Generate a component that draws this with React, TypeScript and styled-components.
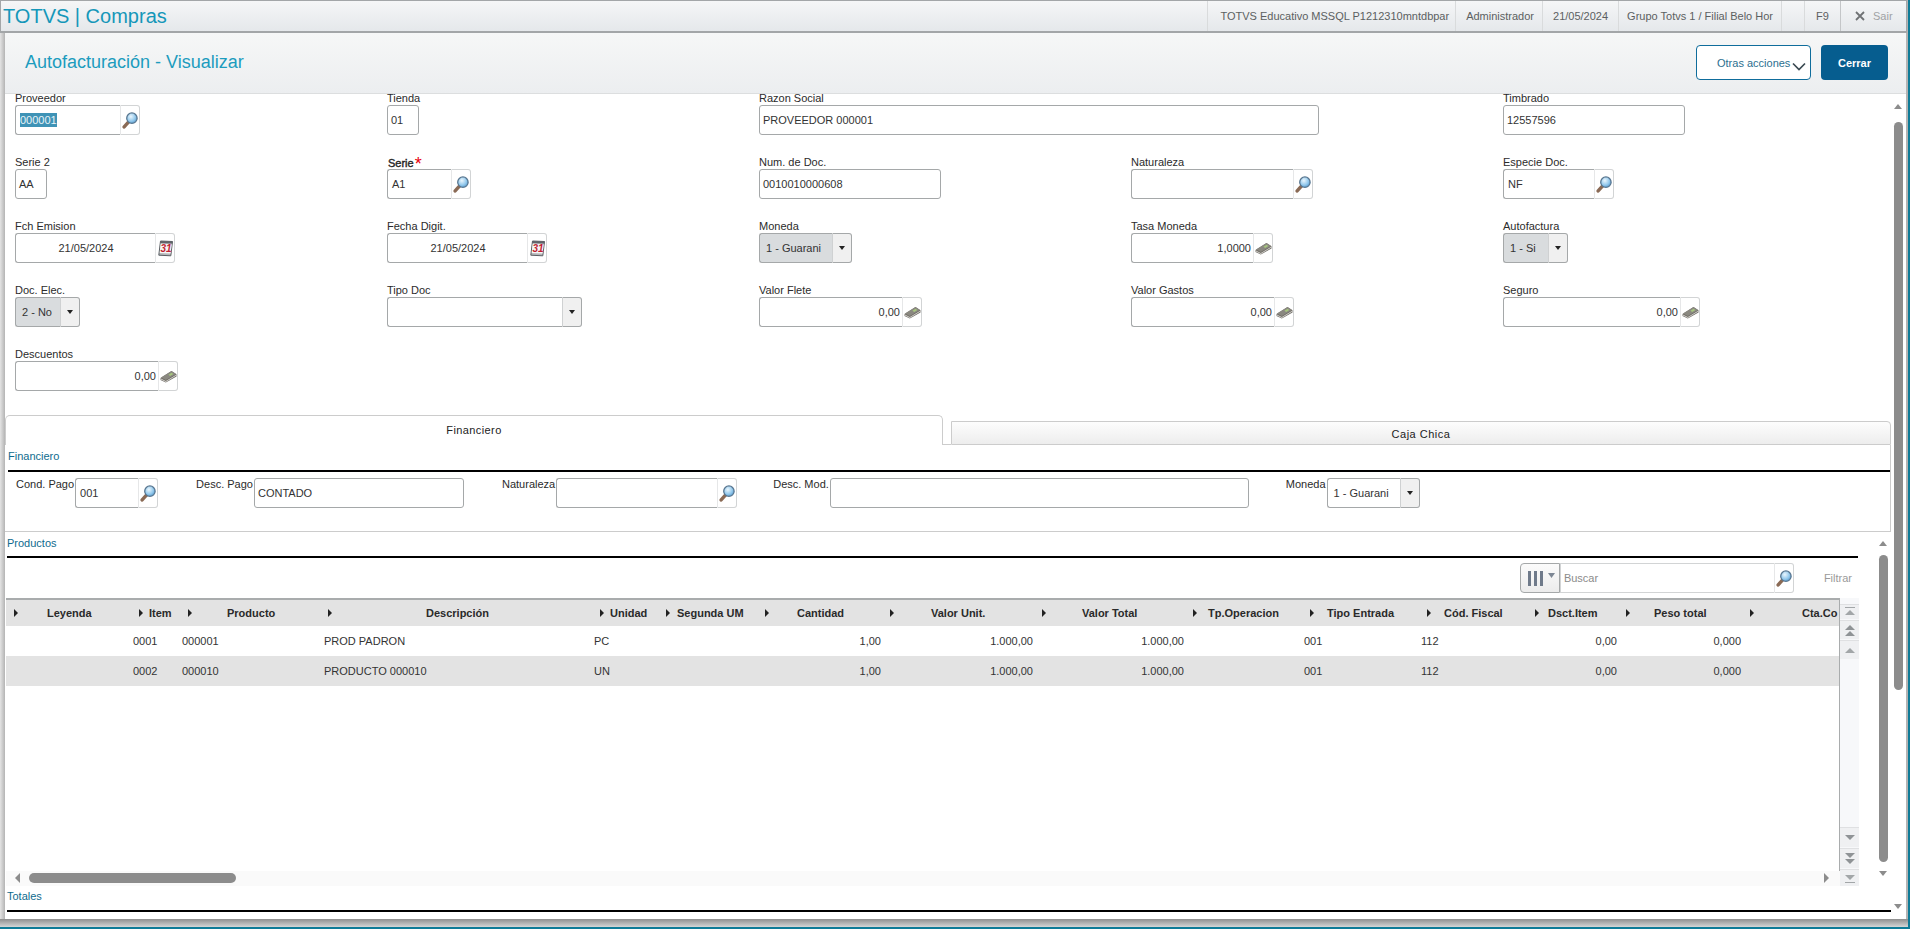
import React from "react";
import styled, { createGlobalStyle } from "styled-components";

const Global = createGlobalStyle`
  html, body { margin: 0; padding: 0; background: #fff; overflow: hidden; }
  body { font-family: "Liberation Sans", Arial, sans-serif; font-size: 11px; color: #333; }
  * { box-sizing: border-box; }
`;

const Frame = styled.div`
  width: 1910px;
  height: 929px;
  border-right: 2px solid #0f7b97;
  border-bottom: 2px solid #0f7b97;
  background: linear-gradient(to right, #e4e4e4 0, #b4b4b4 5px, #b4b4b4 100%);
  display: flex;
  flex-direction: column;
  overflow: hidden;
`;

const TopBar = styled.header`
  height: 33px;
  flex: none;
  margin-right: 1px;
  border: 1px solid #a3a6a8;
  border-bottom-width: 2px;
  background: linear-gradient(to bottom, #f5f6f7, #e5e8eb);
  display: flex;
  align-items: center;
  justify-content: space-between;
`;

const Brand = styled.div`
  font-size: 20px;
  color: #1597b9;
  padding-left: 2px;
  line-height: 28px;
  white-space: nowrap;
`;

const TopItems = styled.div`
  display: flex;
  align-items: stretch;
  height: 100%;
  color: #5c5f61;
`;

const TopItem = styled.div<{ $l?: number; $r?: number; $w?: number }>`
  display: flex;
  align-items: center;
  justify-content: center;
  padding: 0 ${(p) => p.$r ?? 9}px 0 ${(p) => p.$l ?? 9}px;
  width: ${(p) => (p.$w ? `${p.$w}px` : "auto")};
  border-left: 1px solid #d9dbdc;
  white-space: nowrap;
`;

const ExitItem = styled(TopItem)`
  gap: 8px;
  width: 66px;
  justify-content: flex-start;
  padding-left: 14px;
  border-left: 1px solid #c4c6c8;
  color: #a0a2a4;
`;

const Window = styled.main`
  position: relative;
  flex: none;
  width: 1901px;
  height: 886px;
  margin-left: 5px;
  background: #fff;
  overflow: hidden;
`;

const Shade = styled.div`
  flex: 1;
  background: linear-gradient(to bottom, #8e8e8e, #d6d6d6);
`;

const PageHeader = styled.div`
  height: 61px;
  border-bottom: 1px solid #dcdedf;
  background: linear-gradient(to bottom, #f6f7f7, #eceef0);
  display: flex;
  align-items: center;
  justify-content: space-between;
  padding: 0 18px 0 20px;
`;

const PageTitle = styled.h1`
  margin: -1px 0 0;
  font-weight: normal;
  font-size: 18px;
  color: #1c9cbe;
`;

const HeaderActions = styled.div`
  display: flex;
  gap: 10px;
  margin-top: -1px;
`;

const GhostButton = styled.button`
  width: 115px;
  height: 35px;
  padding: 0 0 0 20px;
  background: #fff;
  border: 1px solid #0f6d9c;
  border-radius: 4px;
  font: 11px "Liberation Sans", Arial, sans-serif;
  color: #2c6f90;
  display: flex;
  align-items: center;
`;

const PrimaryButton = styled.button`
  width: 67px;
  height: 35px;
  background: #065d8f;
  border: 0;
  border-radius: 4px;
  font: bold 11px "Liberation Sans", Arial, sans-serif;
  color: #fff;
`;

const FormGrid = styled.section`
  display: grid;
  grid-template-columns: repeat(5, 372px);
  grid-auto-rows: 41px;
  row-gap: 23px;
  padding-left: 10px;
`;

const Field = styled.div<{ $span?: number }>`
  grid-column: span ${(p) => p.$span ?? 1};
  display: flex;
  flex-direction: column;
`;

const Label = styled.label`
  height: 11px;
  line-height: 9px;
  color: #2b2b2b;
  white-space: nowrap;
`;

const StrongLabel = styled(Label)`
  -webkit-text-stroke: 0.4px #222;
  padding-left: 1px;
  line-height: 10px;
`;

const Star = styled.span`
  color: #e8000d;
  font-size: 18px;
  line-height: 8px;
  font-weight: normal;
  -webkit-text-stroke: 0;
  margin-left: 1px;
  vertical-align: -3px;
`;

const Control = styled.div<{ $w: number }>`
  width: ${(p) => p.$w}px;
  height: 30px;
  flex: none;
  display: flex;
`;

const Input = styled.div<{ $align?: string; $pad?: number; $joined?: boolean; $grey?: boolean }>`
  flex: 1;
  min-width: 0;
  height: 30px;
  display: flex;
  align-items: center;
  justify-content: ${(p) => p.$align ?? "flex-start"};
  padding: 0 2px 0 ${(p) => p.$pad ?? 3}px;
  border: 1px solid #a5a8a9;
  border-right: ${(p) => (p.$joined ? "0" : "1px solid #a5a8a9")};
  border-radius: ${(p) => (p.$joined ? "3px 0 0 3px" : "3px")};
  background: ${(p) => (p.$grey ? "#d9dcde" : "#fff")};
  color: #333;
  white-space: nowrap;
`;

const Selected = styled.span`
  background: #3f93b6;
  color: #e8f4f8;
  line-height: 14px;
`;

const IconAddon = styled.div<{ $w: number; $end?: boolean }>`
  width: ${(p) => p.$w}px;
  height: 30px;
  flex: none;
  border: 1px solid #d2d4d5;
  border-left: 1px solid #e6e7e8;
  border-radius: 0 3px 3px 0;
  display: flex;
  align-items: center;
  justify-content: ${(p) => (p.$end ? "flex-end" : "center")};
  padding-right: ${(p) => (p.$end ? "1px" : "0")};
`;

const SelectAddon = styled.div`
  width: 20px;
  flex: none;
  border: 1px solid #a5a8a9;
  border-left: 1px solid #cfd1d2;
  border-radius: 0 3px 3px 0;
  background: #f0f0f0;
  display: flex;
  align-items: center;
  justify-content: center;
`;

const Caret = styled.span`
  width: 0;
  height: 0;
  border-left: 3.5px solid transparent;
  border-right: 3.5px solid transparent;
  border-top: 4px solid #222;
`;

const Chevron = styled.svg`
  margin: 7px 0 0 2px;
  flex: none;
`;

const TabBar = styled.div`
  margin-top: 24px;
  width: 1886px;
  height: 30px;
  display: flex;
  align-items: flex-end;
`;

const ActiveTab = styled.div`
  width: 938px;
  height: 30px;
  padding-top: 7px;
  line-height: 14px;
  text-align: center;
  letter-spacing: 0.4px;
  color: #222;
  background: #fff;
  border: 1px solid #ccc;
  border-bottom: 0;
  border-radius: 5px 5px 0 0;
`;

const TabGap = styled.div`
  width: 8px;
  border-bottom: 1px solid #ccc;
`;

const IdleTab = styled.div`
  flex: 1;
  height: 24px;
  line-height: 24px;
  text-align: center;
  letter-spacing: 0.5px;
  color: #222;
  background: linear-gradient(to bottom, #fdfdfd, #ededed);
  border: 1px solid #ccc;
  border-radius: 0 4px 0 0;
`;

const TabPanel = styled.div`
  width: 1886px;
  height: 87px;
  border-right: 1px solid #ccc;
  border-bottom: 1px solid #ccc;
  padding-left: 3px;
`;

const SectionTitle = styled.div<{ $w: number; $h: number; $lh: number }>`
  width: ${(p) => p.$w}px;
  height: ${(p) => p.$h}px;
  line-height: ${(p) => p.$lh}px;
  border-bottom: 2px solid #000;
  color: #0f6b8e;
  white-space: nowrap;
`;

const InlineRow = styled.div`
  margin-top: 6px;
  display: flex;
`;

const InlineGroup = styled.div<{ $ml: number }>`
  margin-left: ${(p) => p.$ml}px;
  display: flex;
`;

const InlineLabel = styled.label`
  margin-right: 1px;
  line-height: 13px;
  color: #2b2b2b;
  white-space: nowrap;
`;

const Products = styled.section`
  padding-left: 2px;
`;

const Toolbar = styled.div`
  width: 1851px;
  margin-top: 5px;
  height: 30px;
  display: flex;
  justify-content: flex-end;
  align-items: center;
`;

const ColumnsButton = styled.div`
  width: 40px;
  height: 30px;
  flex: none;
  border: 1px solid #a5a8a9;
  border-radius: 4px 0 0 4px;
  background: linear-gradient(to bottom, #fbfbfb, #ececec);
  display: flex;
  align-items: center;
  justify-content: center;
`;

const SearchInput = styled(Input)`
  flex: none;
  width: 214px;
  color: #8b8b8b;
  padding-left: 3px;
  border-color: #d2d4d5;
  border-radius: 0;
`;

const FilterLink = styled.span`
  margin: 0 6px 0 30px;
  color: #9a9a9a;
`;

const GridWrap = styled.div`
  margin: 5px 0 0 -1px;
  width: 1853px;
  height: 288px;
  display: flex;
`;

const GridMain = styled.div`
  width: 1834px;
  flex: none;
  display: flex;
  flex-direction: column;
`;

const GridBody = styled.div`
  flex: 1;
  min-height: 0;
  border-top: 2px solid #a9acad;
  border-right: 1px solid #a9acad;
  overflow: hidden;
`;

const COLS = "125px 49px 140px 272px 66px 99px 125px 152px 151px 117px 117px 108px 91px 124px 100px";

const HeadRow = styled.div`
  display: grid;
  grid-template-columns: ${COLS};
  width: max-content;
  height: 26px;
  background: #e3e3e3;
  align-items: center;
  font-weight: bold;
  color: #2a2a2a;
`;

const HeadCell = styled.div`
  display: flex;
  align-items: center;
  padding-left: 8px;
  white-space: nowrap;
`;

const SortMark = styled.span`
  width: 0;
  height: 0;
  flex: none;
  border-top: 4px solid transparent;
  border-bottom: 4px solid transparent;
  border-left: 4px solid #222;
`;

const HeadLabel = styled.span<{ $ml: number }>`
  margin-left: ${(p) => p.$ml}px;
`;

const DataRow = styled.div<{ $alt?: boolean }>`
  display: grid;
  grid-template-columns: ${COLS};
  width: max-content;
  height: 30px;
  align-items: center;
  background: ${(p) => (p.$alt ? "#e3e3e3" : "#fff")};
  color: #333;
`;

const DataCell = styled.div<{ $right?: boolean; $pad?: number }>`
  text-align: ${(p) => (p.$right ? "right" : "left")};
  padding: ${(p) => (p.$right ? "0 1px 0 0" : `0 0 0 ${p.$pad ?? 2}px`)};
  white-space: nowrap;
`;

const HScroll = styled.div`
  height: 15px;
  flex: none;
  background: #fafafa;
  position: relative;
`;

const HThumb = styled.div`
  position: absolute;
  left: 23px;
  top: 2px;
  width: 207px;
  height: 10px;
  border-radius: 5px;
  background: #8c8c8c;
`;

const Side = styled.div`
  width: 19px;
  flex: none;
  padding-top: 6px;
  background: #f7f8fa;
  display: flex;
  flex-direction: column;
  justify-content: space-between;
`;

const SideGroup = styled.div`
  display: flex;
  flex-direction: column;
  gap: 1px;
`;

const SideButton = styled.div<{ $h: number }>`
  height: ${(p) => p.$h}px;
  background: #eff0f2;
  border-top: 1px solid #dfe0e2;
  display: flex;
  align-items: center;
  justify-content: center;
`;

const Arrow = styled.span<{ $dir: "up" | "down" | "left" | "right"; $x: number; $y: number }>`
  position: absolute;
  left: ${(p) => p.$x}px;
  top: ${(p) => p.$y}px;
  width: 0;
  height: 0;
  ${(p) =>
    p.$dir === "up" || p.$dir === "down"
      ? `border-left: 4.5px solid transparent; border-right: 4.5px solid transparent;
         border-${p.$dir === "up" ? "bottom" : "top"}: 5px solid #8c8c8c;`
      : `border-top: 5px solid transparent; border-bottom: 5px solid transparent;
         border-${p.$dir === "left" ? "right" : "left"}: 5px solid #8c8c8c;`}
`;

const VThumb = styled.div<{ $x: number; $y: number; $h: number }>`
  position: absolute;
  left: ${(p) => p.$x}px;
  top: ${(p) => p.$y}px;
  width: 9px;
  height: ${(p) => p.$h}px;
  border-radius: 5px;
  background: #8c8c8c;
`;

const Search = () => (
  <svg width="16" height="17" viewBox="0 0 15 16" aria-hidden>
    <defs>
      <radialGradient id="lens" cx="0.4" cy="0.35" r="0.8">
        <stop offset="0" stopColor="#eaf6fd" />
        <stop offset="0.55" stopColor="#92c8ec" />
        <stop offset="1" stopColor="#3f86bf" />
      </radialGradient>
    </defs>
    <path d="M2 14 L6 9.5" stroke="#8a6a55" strokeWidth="3.2" strokeLinecap="round" />
    <circle cx="9.3" cy="5.8" r="4.9" fill="url(#lens)" stroke="#587690" strokeWidth="1.2" />
  </svg>
);

const Calendar = () => (
  <svg width="15" height="17" viewBox="0 0 15 17" aria-hidden>
    <path d="M2.5 1 L14.5 1.5 L12.8 15.8 L0.8 15.2 Z" fill="#b6b8ba" stroke="#5a5e63" strokeWidth="1" />
    <path d="M2.5 1 L14.5 1.5 L14.2 3.6 L2.2 3.1 Z" fill="#5f6369" />
    <path d="M2.6 3.8 L13.7 4.2 L12.6 13.4 L1.7 13 Z" fill="#f6f6f6" />
    <text x="2.4" y="12.4" fontFamily="Liberation Sans, sans-serif" fontSize="10" fontWeight="bold" fontStyle="italic" fill="#c11f33">31</text>
  </svg>
);

const Money = () => (
  <svg width="17" height="13" viewBox="0 0 17 13" aria-hidden>
    <path d="M0.5 8 L11.5 1 L16.5 4.2 L16.5 6.4 L5.8 12.6 L0.5 10 Z" fill="#6e6b64" />
    <path d="M0.5 8.2 L5.8 11 L16.5 4.6 L16.5 5.6 L5.8 11.9 L0.5 9.2 Z" fill="#d4d2cd" />
    <path d="M1 7.6 L11.5 1 L16 3.9 L5.8 10 Z" fill="#8a8880" />
    <path d="M8.4 4.8 L11.5 2.8 L13.4 4 L10.2 6 Z" fill="#a6c57e" />
  </svg>
);

const ColumnsIcon = () => (
  <svg width="30" height="17" viewBox="0 0 30 17" aria-hidden>
    <rect x="3" y="1" width="3" height="15" fill="#6f7a8a" />
    <rect x="9" y="1" width="3" height="15" fill="#6f7a8a" />
    <rect x="15" y="1" width="3" height="15" fill="#6f7a8a" />
    <path d="M23 3 L30 3 L26.5 8 Z" fill="#7d8794" />
  </svg>
);

type GlyphKind = "first" | "page" | "one" | "oneDown" | "pageDown" | "last";

const SideGlyph = ({ kind }: { kind: GlyphKind }) => {
  const up = kind === "first" || kind === "page" || kind === "one";
  const tri = (y: number) => (up ? `M5 ${y} L10 ${y + 5} L0 ${y + 5} Z` : `M0 ${y} L10 ${y} L5 ${y + 5} Z`);
  return (
    <svg width="10" height="13" viewBox="0 0 10 13" aria-hidden>
      {kind === "first" && <><rect x="0" y="1" width="10" height="1" fill="#a2a6a8" /><path d={tri(4)} fill="#a2a6a8" /></>}
      {kind === "page" && <><path d={tri(1)} fill="#8f9396" /><path d={tri(7)} fill="#8f9396" /></>}
      {kind === "one" && <path d={tri(4)} fill="#a2a6a8" />}
      {kind === "oneDown" && <path d={tri(4)} fill="#8f9396" />}
      {kind === "pageDown" && <><path d={tri(1)} fill="#8f9396" /><path d={tri(7)} fill="#8f9396" /></>}
      {kind === "last" && <><path d={tri(3)} fill="#a2a6a8" /><rect x="0" y="10" width="10" height="1" fill="#a2a6a8" /></>}
    </svg>
  );
};

type Addon = "search" | "date" | "money";
const AddonIcon = ({ kind }: { kind: Addon }) =>
  kind === "search" ? <Search /> : kind === "date" ? <Calendar /> : <Money />;

const Box = ({
  w, text, addon, align, pad, selected,
}: { w: number; text?: string; addon?: Addon; align?: string; pad?: number; selected?: boolean }) => (
  <Control $w={w}>
    <Input $align={align} $pad={pad} $joined={!!addon}>
      {selected ? <Selected>{text}</Selected> : text}
    </Input>
    {addon && (
      <IconAddon $w={20} $end={addon === "search"}>
        <AddonIcon kind={addon} />
      </IconAddon>
    )}
  </Control>
);

const Select = ({ w, text, grey, pad = 6 }: { w: number; text?: string; grey?: boolean; pad?: number }) => (
  <Control $w={w}>
    <Input $grey={grey} $pad={pad} $joined>{text}</Input>
    <SelectAddon><Caret /></SelectAddon>
  </Control>
);

const columns = [
  { label: "Leyenda", ml: 29 },
  { label: "Item", ml: 6 },
  { label: "Producto", ml: 35 },
  { label: "Descripción", ml: 94 },
  { label: "Unidad", ml: 6 },
  { label: "Segunda UM", ml: 7 },
  { label: "Cantidad", ml: 28 },
  { label: "Valor Unit.", ml: 37 },
  { label: "Valor Total", ml: 36 },
  { label: "Tp.Operacion", ml: 11 },
  { label: "Tipo Entrada", ml: 13 },
  { label: "Cód. Fiscal", ml: 13 },
  { label: "Dsct.Item", ml: 9 },
  { label: "Peso total", ml: 24 },
  { label: "Cta.Co", ml: 48 },
];

const RIGHT_COLS = new Set([6, 7, 8, 12, 13]);

const rows = [
  ["", "0001", "000001", "PROD PADRON", "PC", "", "1,00", "1.000,00", "1.000,00", "", "001", "112", "0,00", "0,000", ""],
  ["", "0002", "000010", "PRODUCTO 000010", "UN", "", "1,00", "1.000,00", "1.000,00", "", "001", "112", "0,00", "0,000", ""],
];

export default function App() {
  return (
    <>
      <Global />
      <Frame>
        <TopBar>
          <Brand>TOTVS | Compras</Brand>
          <TopItems>
            <TopItem $l={12} $r={6}>TOTVS Educativo MSSQL P1212310mntdbpar</TopItem>
            <TopItem $l={10} $r={8}>Administrador</TopItem>
            <TopItem $l={10} $r={10}>21/05/2024</TopItem>
            <TopItem $l={8} $r={8}>Grupo Totvs 1 / Filial Belo Hor</TopItem>
            <TopItem $w={23} />
            <TopItem $w={36} $l={0} $r={0}>F9</TopItem>
            <ExitItem>
              <svg width="10" height="10" viewBox="0 0 10 10" aria-hidden>
                <path d="M1 1 L9 9 M9 1 L1 9" stroke="#6f7274" strokeWidth="1.8" />
              </svg>
              Sair
            </ExitItem>
          </TopItems>
        </TopBar>
        <Window>
          <PageHeader>
            <PageTitle>Autofacturación - Visualizar</PageTitle>
            <HeaderActions>
              <GhostButton>
                Otras acciones
                <Chevron width="14" height="9" viewBox="0 0 14 9" aria-hidden>
                  <path d="M1 1.5 L7 7.5 L13 1.5" fill="none" stroke="#3b4a52" strokeWidth="1.7" />
                </Chevron>
              </GhostButton>
              <PrimaryButton>Cerrar</PrimaryButton>
            </HeaderActions>
          </PageHeader>

          <FormGrid>
            <Field><Label>Proveedor</Label><Box w={125} text="000001" addon="search" pad={4} selected /></Field>
            <Field><Label>Tienda</Label><Box w={32} text="01" /></Field>
            <Field $span={2}><Label>Razon Social</Label><Box w={560} text="PROVEEDOR 000001" /></Field>
            <Field><Label>Timbrado</Label><Box w={182} text="12557596" /></Field>

            <Field><Label>Serie 2</Label><Box w={32} text="AA" /></Field>
            <Field><StrongLabel>Serie<Star>*</Star></StrongLabel><Box w={84} text="A1" addon="search" pad={4} /></Field>
            <Field><Label>Num. de Doc.</Label><Box w={182} text="0010010000608" /></Field>
            <Field><Label>Naturaleza</Label><Box w={182} addon="search" /></Field>
            <Field><Label>Especie Doc.</Label><Box w={111} text="NF" addon="search" pad={4} /></Field>

            <Field><Label>Fch Emision</Label><Box w={160} text="21/05/2024" addon="date" align="center" /></Field>
            <Field><Label>Fecha Digit.</Label><Box w={160} text="21/05/2024" addon="date" align="center" /></Field>
            <Field><Label>Moneda</Label><Select w={93} text="1 - Guarani" grey /></Field>
            <Field><Label>Tasa Moneda</Label><Box w={142} text="1,0000" addon="money" align="flex-end" /></Field>
            <Field><Label>Autofactura</Label><Select w={65} text="1 - Si" grey /></Field>

            <Field><Label>Doc. Elec.</Label><Select w={65} text="2 - No" grey /></Field>
            <Field><Label>Tipo Doc</Label><Select w={195} /></Field>
            <Field><Label>Valor Flete</Label><Box w={163} text="0,00" addon="money" align="flex-end" /></Field>
            <Field><Label>Valor Gastos</Label><Box w={163} text="0,00" addon="money" align="flex-end" /></Field>
            <Field><Label>Seguro</Label><Box w={197} text="0,00" addon="money" align="flex-end" /></Field>

            <Field><Label>Descuentos</Label><Box w={163} text="0,00" addon="money" align="flex-end" /></Field>
          </FormGrid>

          <TabBar>
            <ActiveTab>Financiero</ActiveTab>
            <TabGap />
            <IdleTab>Caja Chica</IdleTab>
          </TabBar>
          <TabPanel>
            <SectionTitle $w={1882} $h={27} $lh={23}>Financiero</SectionTitle>
            <InlineRow>
              <InlineGroup $ml={8}><InlineLabel>Cond. Pago</InlineLabel><Box w={83} text="001" addon="search" pad={4} /></InlineGroup>
              <InlineGroup $ml={38}><InlineLabel>Desc. Pago</InlineLabel><Box w={210} text="CONTADO" /></InlineGroup>
              <InlineGroup $ml={38}><InlineLabel>Naturaleza</InlineLabel><Box w={181} addon="search" /></InlineGroup>
              <InlineGroup $ml={36}><InlineLabel>Desc. Mod.</InlineLabel><Box w={419} /></InlineGroup>
              <InlineGroup $ml={37}><InlineLabel>Moneda</InlineLabel><Select w={93} text="1 - Guarani" /></InlineGroup>
            </InlineRow>
          </TabPanel>

          <Products>
            <SectionTitle $w={1851} $h={26} $lh={22}>Productos</SectionTitle>
            <Toolbar>
              <ColumnsButton><ColumnsIcon /></ColumnsButton>
              <SearchInput $joined>Buscar</SearchInput>
              <IconAddon $w={20} $end><Search /></IconAddon>
              <FilterLink>Filtrar</FilterLink>
            </Toolbar>
            <GridWrap>
              <GridMain>
                <GridBody>
                  <HeadRow>
                    {columns.map((c) => (
                      <HeadCell key={c.label}>
                        <SortMark />
                        <HeadLabel $ml={c.ml}>{c.label}</HeadLabel>
                      </HeadCell>
                    ))}
                  </HeadRow>
                  {rows.map((r, i) => (
                    <DataRow key={r[1]} $alt={i === 1}>
                      {r.map((v, j) => (
                        <DataCell key={j} $right={RIGHT_COLS.has(j)} $pad={j === 3 ? 4 : 2}>{v}</DataCell>
                      ))}
                    </DataRow>
                  ))}
                </GridBody>
                <HScroll>
                  <Arrow $dir="left" $x={9} $y={2} />
                  <HThumb />
                  <Arrow $dir="right" $x={1818} $y={2} />
                </HScroll>
              </GridMain>
              <Side>
                <SideGroup>
                  <SideButton $h={15}><SideGlyph kind="first" /></SideButton>
                  <SideButton $h={19}><SideGlyph kind="page" /></SideButton>
                  <SideButton $h={19}><SideGlyph kind="one" /></SideButton>
                </SideGroup>
                <SideGroup>
                  <SideButton $h={20}><SideGlyph kind="oneDown" /></SideButton>
                  <SideButton $h={20}><SideGlyph kind="pageDown" /></SideButton>
                  <SideButton $h={17}><SideGlyph kind="last" /></SideButton>
                </SideGroup>
              </Side>
            </GridWrap>
            <SectionTitle $w={1884} $h={26} $lh={21}>Totales</SectionTitle>
          </Products>

          <Arrow $dir="up" $x={1889} $y={71} />
          <VThumb $x={1889} $y={89} $h={568} />
          <Arrow $dir="down" $x={1889} $y={871} />
          <Arrow $dir="up" $x={1874} $y={508} />
          <VThumb $x={1874} $y={522} $h={307} />
          <Arrow $dir="down" $x={1874} $y={838} />
        </Window>
        <Shade />
      </Frame>
    </>
  );
}
